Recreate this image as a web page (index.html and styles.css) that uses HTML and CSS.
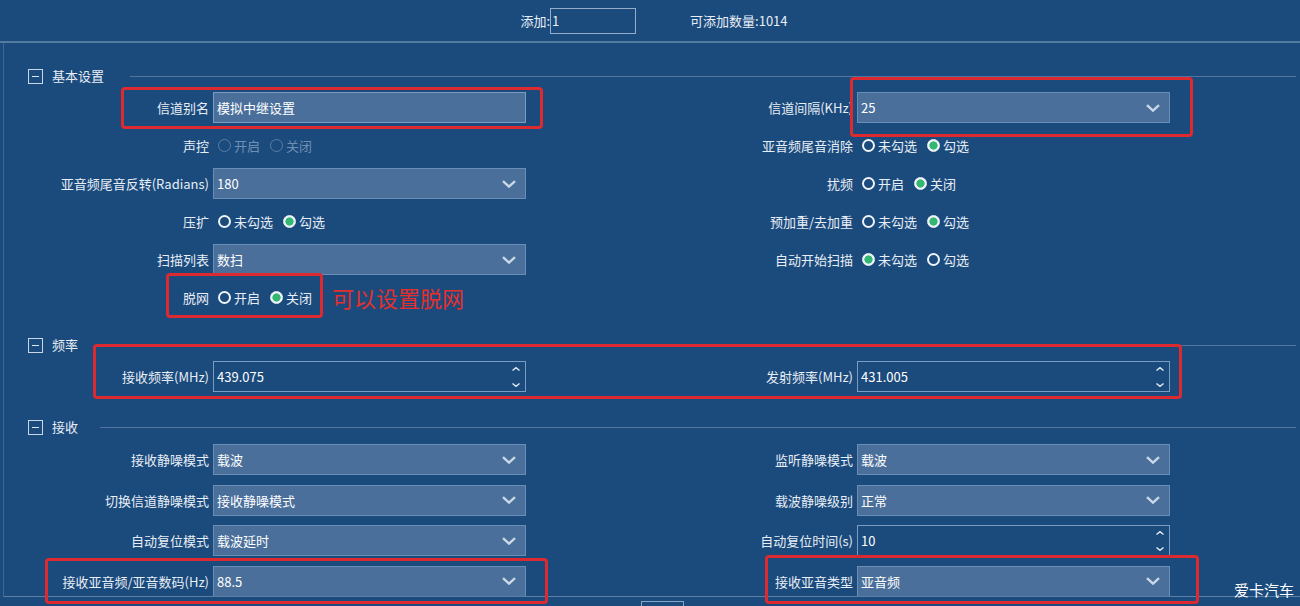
FILE: index.html
```html
<!DOCTYPE html>
<html lang="zh-CN">
<head>
<meta charset="utf-8">
<title>信道设置</title>
<link rel="stylesheet" href="styles.css">
</head>
<body>
<div class="app">
  <header class="topbar">
    <span class="top-label">添加:</span>
    <span class="top-input">1</span>
    <span class="top-count">可添加数量:1014</span>
  </header>

  <main class="panel">
    <section class="group">
      <div class="group-head">
        <span class="toggle"></span>
        <span class="group-title">基本设置</span>
        <span class="group-line"></span>
      </div>
      <div class="form-grid">
        <span class="lbl">信道别名</span>
        <div class="ctl"><span class="textbox">模拟中继设置</span></div>
        <span class="lbl">信道间隔(KHz)</span>
        <div class="ctl"><span class="combo"><span class="val">25</span><svg class="chev" viewBox="0 0 14 8" width="14" height="8"><path d="M1 1.2 L7 6.6 L13 1.2"/></svg></span></div>

        <span class="lbl">声控</span>
        <div class="ctl radios disabled">
          <span class="opt"><span class="radio"></span>开启</span>
          <span class="opt"><span class="radio"></span>关闭</span>
        </div>
        <span class="lbl">亚音频尾音消除</span>
        <div class="ctl radios">
          <span class="opt"><span class="radio"></span>未勾选</span>
          <span class="opt"><span class="radio on"></span>勾选</span>
        </div>

        <span class="lbl">亚音频尾音反转(Radians)</span>
        <div class="ctl"><span class="combo"><span class="val">180</span><svg class="chev" viewBox="0 0 14 8" width="14" height="8"><path d="M1 1.2 L7 6.6 L13 1.2"/></svg></span></div>
        <span class="lbl">扰频</span>
        <div class="ctl radios">
          <span class="opt"><span class="radio"></span>开启</span>
          <span class="opt"><span class="radio on"></span>关闭</span>
        </div>

        <span class="lbl">压扩</span>
        <div class="ctl radios">
          <span class="opt"><span class="radio"></span>未勾选</span>
          <span class="opt"><span class="radio on"></span>勾选</span>
        </div>
        <span class="lbl">预加重/去加重</span>
        <div class="ctl radios">
          <span class="opt"><span class="radio"></span>未勾选</span>
          <span class="opt"><span class="radio on"></span>勾选</span>
        </div>

        <span class="lbl">扫描列表</span>
        <div class="ctl"><span class="combo"><span class="val">数扫</span><svg class="chev" viewBox="0 0 14 8" width="14" height="8"><path d="M1 1.2 L7 6.6 L13 1.2"/></svg></span></div>
        <span class="lbl">自动开始扫描</span>
        <div class="ctl radios">
          <span class="opt"><span class="radio on"></span>未勾选</span>
          <span class="opt"><span class="radio"></span>勾选</span>
        </div>

        <span class="lbl">脱网</span>
        <div class="ctl radios">
          <span class="opt"><span class="radio"></span>开启</span>
          <span class="opt"><span class="radio on"></span>关闭</span>
        </div>
        <span class="lbl"></span>
        <div class="ctl"></div>
      </div>
    </section>

    <section class="group group-freq">
      <div class="group-head">
        <span class="toggle"></span>
        <span class="group-title">频率</span>
        <span class="group-line"></span>
      </div>
      <div class="form-grid">
        <span class="lbl">接收频率(MHz)</span>
        <div class="ctl"><span class="spin"><span class="val">439.075</span><span class="arrows"><svg viewBox="0 0 8 4" width="8" height="4"><path d="M0.5 3.5 L4 0.6 L7.5 3.5"/></svg><svg viewBox="0 0 8 4" width="8" height="4"><path d="M0.5 0.5 L4 3.4 L7.5 0.5"/></svg></span></span></div>
        <span class="lbl">发射频率(MHz)</span>
        <div class="ctl"><span class="spin"><span class="val">431.005</span><span class="arrows"><svg viewBox="0 0 8 4" width="8" height="4"><path d="M0.5 3.5 L4 0.6 L7.5 3.5"/></svg><svg viewBox="0 0 8 4" width="8" height="4"><path d="M0.5 0.5 L4 3.4 L7.5 0.5"/></svg></span></span></div>
      </div>
    </section>

    <section class="group group-rx">
      <div class="group-head">
        <span class="toggle"></span>
        <span class="group-title">接收</span>
        <span class="group-line"></span>
      </div>
      <div class="form-grid wide">
        <span class="lbl">接收静噪模式</span>
        <div class="ctl"><span class="combo"><span class="val">载波</span><svg class="chev" viewBox="0 0 14 8" width="14" height="8"><path d="M1 1.2 L7 6.6 L13 1.2"/></svg></span></div>
        <span class="lbl">监听静噪模式</span>
        <div class="ctl"><span class="combo"><span class="val">载波</span><svg class="chev" viewBox="0 0 14 8" width="14" height="8"><path d="M1 1.2 L7 6.6 L13 1.2"/></svg></span></div>

        <span class="lbl">切换信道静噪模式</span>
        <div class="ctl"><span class="combo"><span class="val">接收静噪模式</span><svg class="chev" viewBox="0 0 14 8" width="14" height="8"><path d="M1 1.2 L7 6.6 L13 1.2"/></svg></span></div>
        <span class="lbl">载波静噪级别</span>
        <div class="ctl"><span class="combo"><span class="val">正常</span><svg class="chev" viewBox="0 0 14 8" width="14" height="8"><path d="M1 1.2 L7 6.6 L13 1.2"/></svg></span></div>

        <span class="lbl">自动复位模式</span>
        <div class="ctl"><span class="combo"><span class="val">载波延时</span><svg class="chev" viewBox="0 0 14 8" width="14" height="8"><path d="M1 1.2 L7 6.6 L13 1.2"/></svg></span></div>
        <span class="lbl">自动复位时间(s)</span>
        <div class="ctl"><span class="spin"><span class="val">10</span><span class="arrows"><svg viewBox="0 0 8 4" width="8" height="4"><path d="M0.5 3.5 L4 0.6 L7.5 3.5"/></svg><svg viewBox="0 0 8 4" width="8" height="4"><path d="M0.5 0.5 L4 3.4 L7.5 0.5"/></svg></span></span></div>

        <span class="lbl">接收亚音频/亚音数码(Hz)</span>
        <div class="ctl"><span class="combo"><span class="val">88.5</span><svg class="chev" viewBox="0 0 14 8" width="14" height="8"><path d="M1 1.2 L7 6.6 L13 1.2"/></svg></span></div>
        <span class="lbl">接收亚音类型</span>
        <div class="ctl"><span class="combo"><span class="val">亚音频</span><svg class="chev" viewBox="0 0 14 8" width="14" height="8"><path d="M1 1.2 L7 6.6 L13 1.2"/></svg></span></div>
      </div>
    </section>
  </main>

  <footer class="footer"><span class="foot-btn"></span></footer>

  <div class="mark mark-alias"></div>
  <div class="mark mark-step"></div>
  <div class="mark mark-offnet"></div>
  <div class="mark mark-freq"></div>
  <div class="mark mark-ctcss"></div>
  <div class="mark mark-type"></div>
  <span class="note">可以设置脱网</span>
  <span class="watermark">爱卡汽车</span>
</div>
</body>
</html>
```

FILE: styles.css
```css
* { box-sizing: border-box; }

html, body {
  margin: 0;
  padding: 0;
}

body {
  background: #1b4a7c;
  color: #e8eef6;
  font-family: "Noto Sans CJK SC", "Noto Sans", sans-serif;
  font-size: 13px;
  width: 1300px;
  height: 606px;
  overflow: hidden;
}

.app {
  position: relative;
  width: 1300px;
  height: 606px;
}

/* top bar */
.topbar {
  height: 43px;
  display: flex;
  align-items: center;
  justify-content: center;
  padding-left: 8px;
  border-bottom: 2px solid #557aa2;
}

.top-label { line-height: 20px; }

.top-input {
  width: 86px;
  height: 26px;
  border: 1px solid #93adca;
  line-height: 24px;
  padding-left: 1px;
}

.top-count {
  margin-left: 54px;
  line-height: 20px;
}

/* panel */
.panel {
  margin-left: 3px;
  height: 554px;
  border-left: 1px solid #3f6690;
  border-bottom: 1px solid #5b7fa6;
  padding-top: 23px;
  overflow: hidden;
}

.group-head {
  height: 20px;
  display: flex;
  align-items: center;
  padding-left: 24px;
  padding-right: 4px;
}

.toggle {
  position: relative;
  width: 15px;
  height: 15px;
  border: 1px solid #c9d8e8;
  flex: none;
}

.toggle::after {
  content: "";
  position: absolute;
  left: 3px;
  right: 3px;
  top: 6px;
  height: 1px;
  background: #dfe8f2;
}

.group-title {
  margin-left: 9px;
  line-height: 20px;
}

.group-line {
  flex: 1;
  height: 1px;
  background: #4f75a0;
  margin-left: 26px;
}

.group-freq { margin-top: 22px; }
.group-rx { margin-top: 25px; }
.group-rx .group-line { margin-left: 22px; }

/* form grid */
.form-grid {
  margin-top: 6px;
  display: grid;
  grid-template-columns: 209px 313px 331px 313px;
  grid-auto-rows: 31px;
  row-gap: 7px;
}

.form-grid.wide {
  row-gap: 9.5px;
  margin-top: 7px;
}

.lbl {
  text-align: right;
  padding-right: 4px;
  line-height: 31px;
  white-space: nowrap;
}

.ctl {
  display: flex;
  align-items: center;
  height: 31px;
}

.textbox,
.combo,
.spin {
  width: 313px;
  height: 31px;
  border: 1px solid #7b9cc2;
  display: flex;
  align-items: center;
  padding-left: 3px;
  color: #ffffff;
}

.textbox { background: #4a6f9b; }

.combo {
  background: #4a6f9b;
  border-color: #6a8db6;
  padding-right: 9px;
}

.combo .val,
.spin .val { flex: 1; }

.chev path {
  fill: none;
  stroke: #cbd8e7;
  stroke-width: 2.4;
  stroke-linejoin: miter;
}

.spin {
  background: transparent;
  padding-right: 5px;
}

.arrows {
  display: flex;
  flex-direction: column;
  justify-content: space-between;
  height: 20px;
}

.arrows svg { display: block; }

.arrows path {
  fill: none;
  stroke: #dbe5f0;
  stroke-width: 1.4;
}

/* radios */
.radios {
  padding-left: 5px;
  gap: 10px;
}

.opt {
  display: flex;
  align-items: center;
  gap: 3px;
  line-height: 20px;
}

.radio {
  width: 13px;
  height: 13px;
  border-radius: 50%;
  border: 2px solid #eef3f8;
  flex: none;
}

.radio.on {
  background: radial-gradient(circle, #35b774 0 3.8px, #eef3f8 4.4px);
  border-width: 1.5px;
}

.radios.disabled { color: #6f90b4; }
.radios.disabled .radio {
  border: 1.5px solid #5c7ea5;
}

/* footer */
.footer {
  display: flex;
  justify-content: center;
  padding-left: 24px;
  padding-top: 4px;
}

.foot-btn {
  width: 43px;
  height: 12px;
  border: 1px solid #8aa5c4;
}

/* annotations */
.mark {
  position: absolute;
  border: 3px solid #dc2a30;
  border-radius: 4px;
  pointer-events: none;
}

.mark-alias  { left: 121px; top: 87px;  width: 422px; height: 42px; }
.mark-step   { left: 850px; top: 77px;  width: 343px; height: 60px; }
.mark-offnet { left: 166px; top: 273px; width: 157px; height: 45px; }
.mark-freq   { left: 93px;  top: 344px; width: 1089px; height: 55px; }
.mark-ctcss  { left: 45px;  top: 558px; width: 503px; height: 46px; }
.mark-type   { left: 765px; top: 555px; width: 434px; height: 49px; }

.note {
  position: absolute;
  left: 332px;
  top: 283px;
  font-size: 22px;
  line-height: 28px;
  color: #e3302c;
}

.watermark {
  position: absolute;
  right: 6px;
  top: 580px;
  font-size: 15px;
  line-height: 20px;
  color: #ffffff;
}
```
